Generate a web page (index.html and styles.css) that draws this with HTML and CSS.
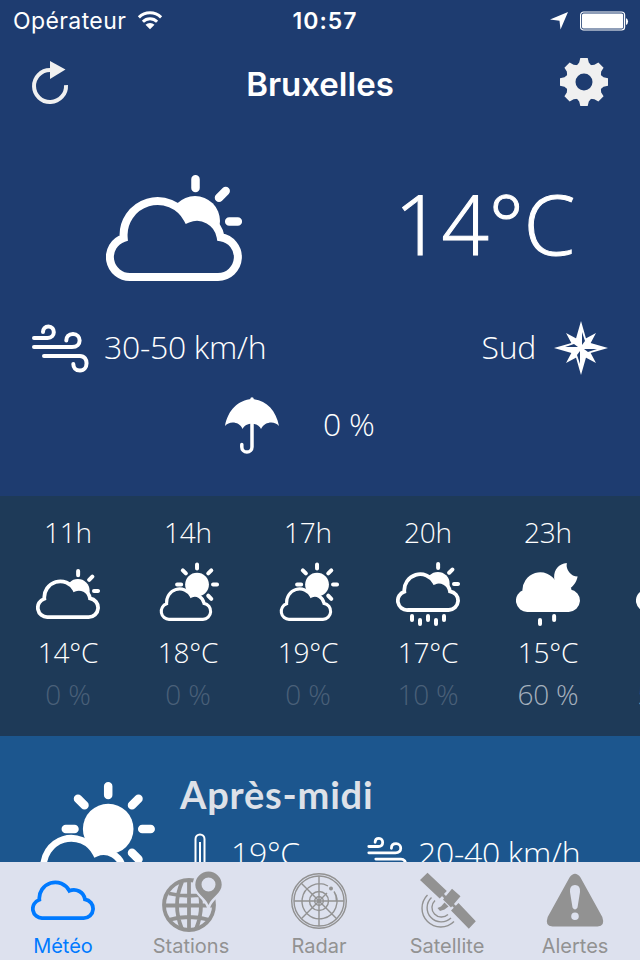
FILE: index.html
```html
<!DOCTYPE html>
<html lang="fr">
<head>
  <meta charset="UTF-8">
  <title>Météo - Bruxelles</title>
  <link rel="stylesheet" href="styles.css">
</head>
<body>
  <svg class="defs">
    <symbol id="cloud" viewBox="0 0 136 85">
      <path class="line" d="M24.7 81A20 20 0 0 1 17.7 42A34 34 0 0 1 81.5 22.9A24 24 0 0 1 114.7 41.2A20 20 0 0 1 112 81Z"/>
    </symbol>
    <g id="cloud-sun">
      <circle cx="89" cy="46" r="25"/>
      <path class="ray" d="M89.5 4.3V13M113 22.8L119.7 16M123.2 46.5H131.8"/>
      <path class="line" d="M24.7 102A20 20 0 0 1 17.7 63A34 34 0 0 1 81.5 43.9A24 24 0 0 1 114.7 62.2A20 20 0 0 1 112 102Z"/>
    </g>
    <symbol id="cloudy" viewBox="0 0 136 136">
      <use href="#cloud-sun" y="15"/>
    </symbol>
    <symbol id="sunny" viewBox="0 0 136 136">
      <g transform="translate(9.5 1)">
        <circle cx="77.7" cy="47" r="25.3"/>
        <path class="ray" d="M77.7 4.3V13M35.3 47H44M111.7 47H120.2M47.5 16.8L54 23.3M108 16.8L101.5 23.3M101.5 70.7L108 77.2"/>
        <path class="line" transform="translate(-1.5 52) scale(.82 .85)" d="M24.7 81A20 20 0 0 1 17.7 42A34 34 0 0 1 81.5 22.9A24 24 0 0 1 114.7 41.2A20 20 0 0 1 112 81Z"/>
      </g>
    </symbol>
    <symbol id="rain" viewBox="0 0 136 136">
      <use href="#cloud-sun"/>
      <path class="ray" d="M34 115V123M51 123.5V131.5M68 115V123M85 123.5V131.5M102 115V123"/>
    </symbol>
    <symbol id="night" viewBox="0 0 136 136">
      <path d="M108 2C91 4 81 15 81 33L84 60L112 58C122 52 128 44 131 31A25 25 0 0 1 108 2Z"/>
      <path class="solid" d="M24.7 102A20 20 0 0 1 17.7 63A34 34 0 0 1 81.5 43.9A24 24 0 0 1 114.7 62.2A20 20 0 0 1 112 102Z"/>
      <path class="ray" d="M51 123.5V131.5M81 115V123"/>
    </symbol>
    <symbol id="wind" viewBox="0 0 60 52">
      <g class="stroke">
        <path d="M4 16H17.5C26 16 25.5 4.5 18.5 4.5C15 4.5 13 7 13 10"/>
        <path d="M4 25H42C52.5 25 51.5 12 43 12C38.5 12 36.3 15 36.3 18.5"/>
        <path d="M14 34H50C59 34 58.5 48.5 50 48.5C45.5 48.5 43.3 45.5 43.3 42"/>
      </g>
    </symbol>
  </svg>

  <div class="app">
    <div class="status">
      <div class="carrier">
        <span>Opérateur</span>
        <svg class="wifi" viewBox="0 0 26 19">
          <path class="arc" d="M1.9 6.4A15.8 15.8 0 0 1 24.1 6.4M5.9 10.7A10 10 0 0 1 20.1 10.7"/>
          <path d="M8.5 13.7A6.5 6.5 0 0 1 17.5 13.7L13 18.2Z"/>
        </svg>
      </div>
      <b class="time">10:57</b>
      <div class="right">
        <svg width="18" height="19" viewBox="0 0 18 19"><path d="M18 1L0 8.5L9.5 9.7L10.5 18.5Z"/></svg>
        <svg width="50" height="20" viewBox="0 0 50 20">
          <rect class="shell" x=".6" y="1" width="44" height="18" rx="3"/>
          <rect x="2" y="2.5" width="41.2" height="15" rx="1.5"/>
          <path d="M46 7A4 4 0 0 1 46 14Z"/>
        </svg>
      </div>
    </div>

    <div class="nav">
      <svg width="40" height="48" viewBox="0 0 40 48">
        <path class="turn" d="M36 27A16 16 0 1 1 20 12"/>
        <path d="M20 3L35.5 11.5L20 21Z"/>
      </svg>
      <h1>Bruxelles</h1>
      <svg width="48" height="48" viewBox="-24 -24 48 48">
        <circle class="gear" r="13.3"/>
        <g id="teeth">
          <path id="tooth" d="M-3.7-24H3.7L4.8-19.5L8.5-15H-8.5L-4.8-19.5Z"/>
          <use href="#tooth" transform="rotate(45)"/>
          <use href="#tooth" transform="rotate(90)"/>
          <use href="#tooth" transform="rotate(135)"/>
        </g>
        <use href="#teeth" transform="rotate(180)"/>
      </svg>
    </div>

    <div class="current">
      <div class="now">
        <svg class="now-icon"><use href="#cloudy"/></svg>
        <div class="temp">14°C</div>
      </div>
      <div class="wind-row">
        <svg class="wind"><use href="#wind"/></svg>
        <span class="speed">30-50 km/h</span>
        <span class="dir">Sud</span>
        <svg class="compass" viewBox="-27 -27 54 54">
          <path d="M-15-15L0-7L15-15L7 0L15 15L0 7L-15 15L-7 0Z"/>
          <path d="M0-27L6-6L27 0L6 6L0 27L-6 6L-27 0L-6-6Z"/>
          <path class="cut" d="M1-16L4-7L1-3ZM16 1L7 4L3 1ZM-1 16L-4 7L-1 3ZM-16-1L-7-4L-3-1Z"/>
        </svg>
      </div>
      <div class="rain-row">
        <svg class="umbrella" viewBox="0 0 56 58">
          <path d="M1 30C4 14 14 4 28 3C42 4 52 14 55 30C51 25 41 25 37 33C35 26 21 26 18.7 33C15 25 5 25 1 30Z"/>
          <path class="stem" d="M28 3V51A5 5 0 0 1 17.8 51V48.5"/>
        </svg>
        <span>0 %</span>
      </div>
    </div>

    <div class="hours">
      <div class="hour"><span>11h</span><svg><use href="#cloudy"/></svg><span>14°C</span><span class="pct">0 %</span></div>
      <div class="hour"><span>14h</span><svg><use href="#sunny"/></svg><span>18°C</span><span class="pct">0 %</span></div>
      <div class="hour"><span>17h</span><svg><use href="#sunny"/></svg><span>19°C</span><span class="pct">0 %</span></div>
      <div class="hour"><span>20h</span><svg><use href="#rain"/></svg><span>17°C</span><span class="pct">10 %</span></div>
      <div class="hour"><span>23h</span><svg><use href="#night"/></svg><span>15°C</span><span class="pct wet">60 %</span></div>
      <div class="hour"><span>2h</span><svg><use href="#night"/></svg><span>14°C</span><span class="pct wet">50 %</span></div>
    </div>

    <div class="period">
      <svg class="period-icon"><use href="#sunny"/></svg>
      <div class="period-info">
        <h2>Après-midi</h2>
        <div class="period-row">
          <svg class="thermo" viewBox="0 0 12 40"><path class="tube" d="M1.5 40V6A4.5 4.5 0 0 1 10.5 6V40"/><path class="mercury" d="M6 9V40"/></svg>
          <span class="deg">19°C</span>
          <svg class="wind-small"><use href="#wind"/></svg>
          <span class="kmh">20-40 km/h</span>
        </div>
      </div>
    </div>

    <div class="tabs">
      <div class="tab active">
        <svg viewBox="0 0 64 64"><use href="#cloud" y="10" width="64" height="40"/></svg>
        <span>Météo</span>
      </div>
      <div class="tab">
        <svg viewBox="0 0 64 64">
          <g class="globe">
            <circle cx="30" cy="35" r="25"/>
            <path d="M30 10V60M5 35.5H55M10 23.5Q30 28 50 23.5M9 50Q30 44 51 50M23 12Q13 35 23 59M37 12Q47 35 37 59"/>
          </g>
          <path class="halo" d="M49.5 35C46 27 36.3 23 36.3 14.8A13.2 13.2 0 0 1 62.7 14.8C62.7 23 53 27 49.5 35Z"/>
          <path fill-rule="evenodd" d="M49.5 35C46 27 36.3 23 36.3 14.8A13.2 13.2 0 0 1 62.7 14.8C62.7 23 53 27 49.5 35ZM49.5 7.5A7 7 0 1 0 49.5 21.5A7 7 0 1 0 49.5 7.5Z"/>
        </svg>
        <span>Stations</span>
      </div>
      <div class="tab">
        <svg viewBox="0 0 64 64">
          <g class="radar">
            <circle cx="32" cy="31" r="27.3"/>
            <circle cx="32" cy="31" r="25"/>
            <circle cx="32" cy="31" r="9.5"/>
            <circle cx="32" cy="31" r="4.3"/>
            <path d="M32 6V56M7 31H57M14.3 13.3L49.7 48.7M14.3 48.7L40 23M47 21.5A17.5 17.5 0 1 1 41 16M47 21.5A17.5 17.5 0 0 1 49.5 31"/>
          </g>
          <circle cx="44" cy="18.5" r="2"/>
        </svg>
        <span>Radar</span>
      </div>
      <div class="tab">
        <svg viewBox="0 0 64 64">
          <path d="M12.5 2.7L5 10L24.7 28.5L31.8 21ZM60.8 51.3L53.8 58.8L36 40.5L43.5 33ZM37 18.7L45.5 26.3L36 37.5L28 29.5ZM29 24L41 36L39 38L27 26Z"/>
          <path d="M29.5 32.5L33.5 36.5L29.5 39.5L25 41L22.5 38L26 36.5Z"/>
          <g class="radar"><path d="M12.5 25A18 18 0 0 0 39 51.5M16.5 27.5A13.5 13.5 0 0 0 36 48M20 30.5A9 9 0 0 0 33 44.5"/></g>
        </svg>
        <span>Satellite</span>
      </div>
      <div class="tab">
        <svg viewBox="0 0 64 64">
          <path fill-rule="evenodd" d="M26.5 7.5Q32 0 37.5 7.5L59.3 47Q62.5 56 54.5 56.5H9.5Q1.5 56 4.7 47ZM32 15Q26.5 15 27 22L29.5 37.5Q32 41.5 34.5 37.5L37 22Q37.5 15 32 15ZM32 42.5A3.8 3.8 0 1 0 32 50.1A3.8 3.8 0 1 0 32 42.5Z"/>
        </svg>
        <span>Alertes</span>
      </div>
    </div>
  </div>
</body>
</html>
```
FILE: styles.css
```css
* { box-sizing: border-box; }

body {
  margin: 0;
  color: white;
  font-family: "Open Sans", sans-serif;
  font-weight: 300;
}

h1, h2 { margin: 0; }

svg {
  display: block;
  flex: none;
  fill: currentColor;
}

.defs { display: none; }

.app {
  --bg: #1e3c70;
  width: 640px;
  height: 960px;
  overflow: hidden;
  display: flex;
  flex-direction: column;
  background: var(--bg);
}

/* weather icons */
.line {
  fill: var(--bg);
  stroke: currentColor;
  stroke-width: 8;
}
.solid {
  stroke: currentColor;
  stroke-width: 8;
}
.ray {
  stroke: currentColor;
  stroke-width: 8.5;
  stroke-linecap: round;
}
.stroke {
  fill: none;
  stroke: currentColor;
  stroke-width: 4;
  stroke-linecap: round;
}

/* status bar */
.status {
  height: 40px;
  flex: none;
  display: grid;
  grid-template-columns: 1fr auto 1fr;
  align-items: center;
  padding: 1px 10px 0 13px;
  font: 400 23px Inter, sans-serif;
}
.carrier {
  display: flex;
  align-items: center;
  gap: 11px;
  letter-spacing: .4px;
}
.wifi { width: 26px; height: 19px; }
.arc {
  fill: none;
  stroke: currentColor;
  stroke-width: 3;
}
.time {
  font-weight: 600;
  letter-spacing: 1px;
  margin-left: 7px;
}
.right {
  display: flex;
  justify-content: flex-end;
  gap: 12px;
}
.shell {
  fill: none;
  stroke: currentColor;
  stroke-width: 1.2;
}

.nav {
  height: 88px;
  flex: none;
  display: grid;
  grid-template-columns: 1fr auto 1fr;
  align-items: center;
  padding: 0 32px 4px 30px;
  color: #f0f0f0;
}
.nav svg:last-child { justify-self: end; }
.nav h1 {
  font: 600 33px Inter, sans-serif;
  padding: 3px 0 0 2px;
  color: white;
}
.turn {
  fill: none;
  stroke: currentColor;
  stroke-width: 4;
}
.gear {
  fill: none;
  stroke: currentColor;
  stroke-width: 9.6;
}

/* current weather */
.current {
  height: 368px;
  flex: none;
  padding: 32px 32px 0 30px;
  font-size: 32px;
  letter-spacing: -.3px;
}
.now {
  height: 152px;
  display: flex;
  justify-content: space-between;
  padding: 0 33px 0 76px;
}
.now-icon { width: 136px; height: 136px; }
.temp {
  font-size: 83px;
  line-height: 126px;
  -webkit-text-stroke: 1px white;
}
.wind-row {
  display: flex;
  align-items: center;
  height: 72px;
}
.wind { width: 60px; height: 52px; }
.wind-row span, .rain-row span { margin-bottom: 4px; }
.speed { margin-left: 14px; }
.dir { margin-left: auto; margin-right: 18px; }
.compass { width: 54px; height: 54px; }
.cut { fill: var(--bg); }
.rain-row {
  display: flex;
  align-items: center;
  gap: 43px;
  padding-left: 194px;
  height: 82px;
}
.umbrella { width: 56px; height: 58px; }
.stem {
  fill: none;
  stroke: currentColor;
  stroke-width: 3.5;
  stroke-linecap: round;
}

/* hourly forecast */
.hours {
  --bg: #1e3a58;
  height: 240px;
  flex: none;
  display: flex;
  padding-left: 8px;
  background: var(--bg);
  font-size: 28px;
  letter-spacing: -.2px;
}
.hour {
  flex: 0 0 120px;
  display: flex;
  flex-direction: column;
  align-items: center;
  padding-top: 15px;
  line-height: 42px;
}
.hour svg {
  width: 64px;
  height: 64px;
  margin: 9px 0 5px;
}
.pct { color: #4a6079; }
.wet { color: #a5b0bd; }

.period {
  --bg: #1c568e;
  flex: 1;
  min-height: 0;
  overflow: hidden;
  display: flex;
  align-items: flex-start;
  padding: 45px 0 0 20.5px;
  background: var(--bg);
}
.period-icon { width: 136px; height: 136px; }
.period-info { padding-left: 23.5px; margin-top: -13px; }
.period h2 {
  font-family: Lato, sans-serif;
  font-size: 38px;
  font-weight: 700;
  line-height: 52px;
  letter-spacing: .8px;
  color: #dde1e8;
}
.period-row {
  display: flex;
  align-items: flex-start;
  padding: 13px 0 0 14px;
  font-size: 32px;
  line-height: 40px;
  letter-spacing: -.3px;
}
.thermo { width: 12px; height: 40px; }
.tube, .mercury {
  fill: none;
  stroke: currentColor;
  stroke-width: 2;
}
.deg { flex: 0 0 160px; padding-left: 25px; }
.wind-small { width: 42px; height: 37px; margin-top: 2px; }
.kmh { padding-left: 10px; white-space: nowrap; }

/* tab bar */
.tabs {
  --bg: #dde1ee;
  height: 98px;
  flex: none;
  display: flex;
  background: var(--bg);
  color: #929292;
  font: 400 20px Inter, sans-serif;
}
.tab {
  flex: 1;
  display: flex;
  flex-direction: column;
  align-items: center;
  padding: 8px 2px 0 0;
  line-height: 24px;
}
.tab svg { width: 64px; height: 64px; }
.active { color: #007aff; }
.globe {
  fill: none;
  stroke: currentColor;
  stroke-width: 3.8;
}
.halo {
  fill: var(--bg);
  stroke: var(--bg);
  stroke-width: 5;
}
.radar {
  fill: none;
  stroke: currentColor;
  stroke-width: 1.4;
}
```
